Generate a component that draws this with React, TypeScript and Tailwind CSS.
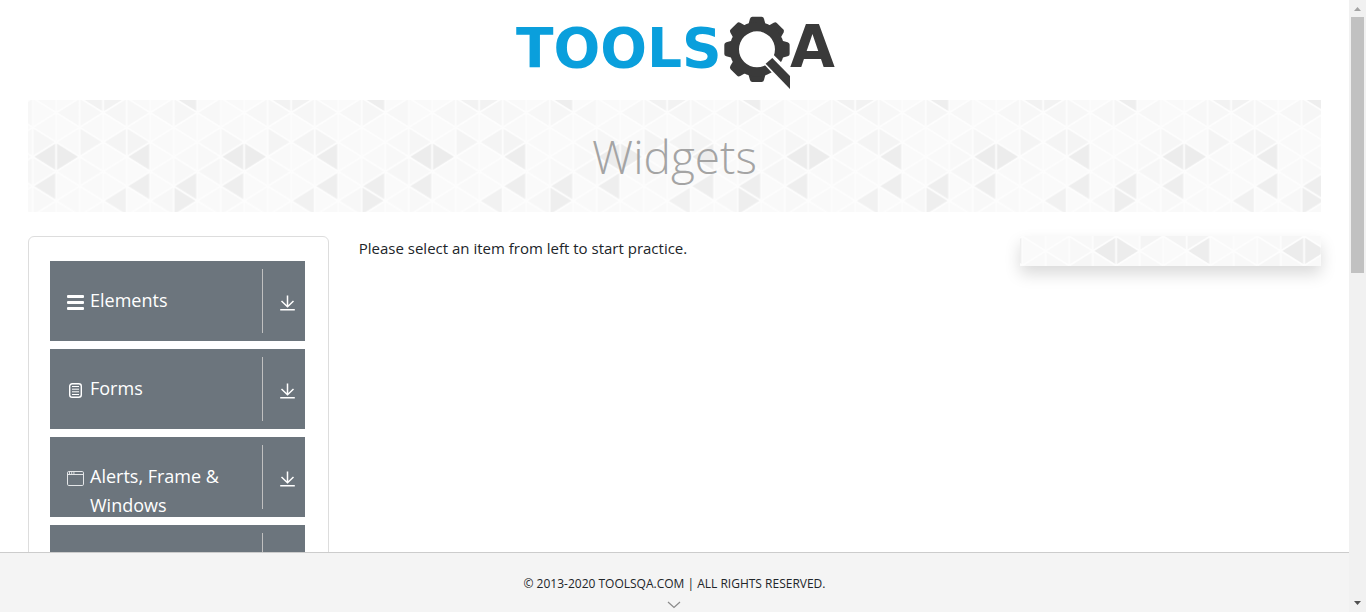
import React from "react";

const COL = 23.5;
const HALF = 14.7;
const TILE = COL * 8;

const SHADES: Record<string, string> = {
  "0,4": "#ececec", "1,4": "#ececec", "0,6": "#eeeeee", "4,4": "#ededed", "4,6": "#eeeeee",
  "6,6": "#eeeeee", "6,7": "#eeeeee", "3,7": "#f1f1f1", "6,0": "#eeeeee", "2,0": "#f2f2f2",
  "3,0": "#f2f2f2", "2,3": "#f4f4f4", "3,3": "#f4f4f4", "4,3": "#f4f4f4", "0,3": "#f6f6f6",
  "1,1": "#f7f7f7", "2,1": "#f7f7f7", "3,1": "#f6f6f6", "4,1": "#f7f7f7", "5,1": "#f7f7f7",
  "6,1": "#f6f6f6", "7,1": "#f7f7f7", "7,3": "#f8f8f8", "7,5": "#f6f6f6", "0,5": "#f8f8f8",
  "6,5": "#f8f8f8", "2,5": "#f8f8f8", "5,7": "#f7f7f7", "0,7": "#f8f8f8", "7,4": "#f8f8f8",
};

function Triangles({ id, x, y, className }: { id: string; x: number; y: number; className?: string }) {
  const cells: React.ReactElement[] = [];
  for (let k = 0; k < 8; k++) {
    for (let n = -1; n < 10; n++) {
      const l = k * COL;
      const r = l + COL;
      const c = n * HALF;
      const apexLeft = (k + n) % 2 === 0;
      const points = apexLeft
        ? `${l},${c} ${r},${c - HALF} ${r},${c + HALF}`
        : `${r},${c} ${l},${c - HALF} ${l},${c + HALF}`;
      const plain = apexLeft ? "#f9f9f9" : "#fafafa";
      cells.push(<polygon key={`${k},${n}`} points={points} fill={SHADES[`${k},${n}`] ?? plain} />);
    }
  }
  return (
    <svg aria-hidden="true" className={className} width="100%" height="100%">
      <defs>
        <pattern id={id} x={x} y={y} width={TILE} height={HALF * 8} patternUnits="userSpaceOnUse">
          <g stroke="#fdfdfd" strokeWidth="1.6" strokeLinejoin="round">{cells}</g>
        </pattern>
      </defs>
      <rect width="100%" height="100%" fill={`url(#${id})`} />
    </svg>
  );
}

function Logo() {
  return (
    <svg viewBox="0 0 340 90" className="h-[90px] w-[340px]" role="img" aria-label="TOOLSQA">
      <text x="11" y="59" fontSize="55" fontWeight="700" fontFamily="'DejaVu Sans', sans-serif" fill="#0a9fdc">TOOLS</text>
      <g transform="scale(0.3333)">
        <g fill="#3a3a3a" transform="translate(756 124)">
          {[0, 45, 90, 180, 225, 270, 315].map((a) => (
            <path key={a} transform={`rotate(${a})`} d="M-27-70-21-92Q-19-98-14-98H14Q19-98 21-92L27-70Z" />
          ))}
          <path fillRule="evenodd" d="M0-82A82 82 0 1 1 0 82A82 82 0 1 1 0-82ZM0-54A54 54 0 1 0 0 54A54 54 0 1 0 0-54Z" />
        </g>
        <path d="M783 166 804 147 866 209V256Z" fill="#fff" stroke="#fff" strokeWidth="12" />
        <path d="M782 167 802 150 855 204V243Z" fill="#3a3a3a" />
      </g>
      <text x="285" y="59" fontSize="58" fontWeight="700" fontFamily="'DejaVu Sans', sans-serif" fill="#3a3a3a">A</text>
    </svg>
  );
}

function MenuIcon() {
  return (
    <svg width="18" height="18" viewBox="0 0 18 18" aria-hidden="true" fill="#fff">
      <rect x="0" y="1" width="17" height="3" rx="1" />
      <rect x="0" y="7" width="17" height="3" rx="1" />
      <rect x="0" y="13" width="17" height="3" rx="1" />
    </svg>
  );
}

function FormIcon() {
  return (
    <svg width="18" height="18" viewBox="0 0 18 18" aria-hidden="true" fill="none" stroke="#fff">
      <rect x="2.7" y="1.7" width="11.6" height="13.6" rx="2.5" strokeWidth="1.4" />
      <path d="M5 4.500h7M5 7.200h7M5 9.800h7M5 12.500h7" strokeWidth="1" />
    </svg>
  );
}

function WindowIcon() {
  return (
    <svg width="18" height="18" viewBox="0 0 18 18" aria-hidden="true" fill="none" stroke="#e4e6e8">
      <rect x="0.5" y="1.5" width="16" height="14" rx="1.3" />
      <path d="M0.5 4.5h16" />
      <path d="M2 3h1M4.200 3h1M6.400 3h1" strokeWidth="1.4" stroke="#fff" />
    </svg>
  );
}

function DownIcon() {
  return (
    <svg width="16" height="16" viewBox="0 0 16 16" aria-hidden="true" fill="none" stroke="#fff" strokeWidth="1.5">
      <path d="M7.500 0.500V11.500M1.500 6l6 5.700L13.500 6M0.200 14.800h14.600" />
    </svg>
  );
}

const groups = [
  { name: "Elements", label: "Elements", icon: <MenuIcon /> },
  { name: "Forms", label: "Forms", icon: <FormIcon /> },
  { name: "Alerts, Frame & Windows", label: "Alerts, Frame & Windows", icon: <WindowIcon /> },
  { name: "Widgets", label: "", icon: <WindowIcon /> },
];

export default function App() {
  return (
    <div className="flex h-screen overflow-hidden bg-white font-['Open_Sans','Noto_Sans',sans-serif] text-[#212529]">
      <div className="flex min-w-0 flex-1 flex-col">
        <div className="min-h-0 flex-1 overflow-hidden px-7">
          <header className="flex h-[100px] justify-center pt-2">
            <a href="#" className="block h-[90px]">
              <Logo />
            </a>
          </header>

          <div className="relative flex h-28 items-center justify-center">
            <Triangles id="banner" x={4.7} y={-2} className="absolute inset-0" />
            <h1 className="relative text-[46px] font-light text-[#a4a4a4]">Widgets</h1>
          </div>

          <div className="mt-6 grid grid-cols-4 items-start gap-[30px]">
            <nav className="rounded-md border border-[#dddddd] pt-6 pr-[23px] pb-6 pl-[21px]">
              <ul className="flex flex-col gap-2">
                {groups.map((g) => (
                  <li key={g.name}>
                    <button
                      type="button"
                      aria-label={g.name}
                      className="flex h-20 w-full bg-[#6c757d] py-2 pl-[17px] text-left text-white"
                    >
                      <span className="mt-[25px] shrink-0">{g.icon}</span>
                      <span className="mt-[17px] ml-[5px] min-w-0 flex-1 text-lg leading-[29px]">{g.label}</span>
                      <span className="flex h-16 w-[43px] shrink-0 items-center border-l border-[#c0c0c0] pt-1 pl-[17px]">
                        <DownIcon />
                      </span>
                    </button>
                  </li>
                ))}
              </ul>
            </nav>
            <main className="col-span-2 text-[15px] leading-6">Please select an item from left to start practice.</main>
            <aside className="h-[30px] shadow-[0_8px_16px_rgba(0,0,0,0.15)]">
              <Triangles id="side" x={72.7} y={-43.8} />
            </aside>
          </div>
        </div>

        <footer className="flex h-[60px] shrink-0 flex-col items-center border-t border-[#cccccc] bg-[#f4f4f4] pt-[21px]">
          <p className="text-xs leading-5">© 2013-2020 TOOLSQA.COM | ALL RIGHTS RESERVED.</p>
          <svg width="14" height="8" viewBox="0 0 14 8" className="mt-[7px] mr-[2px] shrink-0" aria-hidden="true" fill="none" stroke="#8a8a8a" strokeWidth="1.2">
            <path d="M1 1l6 5.5L13 1" />
          </svg>
        </footer>
      </div>

      <div aria-hidden="true" className="flex w-[17px] shrink-0 flex-col items-center justify-between bg-[#f1f1f1]">
        <div className="flex flex-col items-center">
          <svg width="17" height="17" viewBox="0 0 17 17" fill="#a3a3a3">
            <path d="M5 11h7L8.500 7Z" />
          </svg>
          <div className="h-64 w-[13px] bg-[#c1c1c1]" />
        </div>
        <svg width="17" height="17" viewBox="0 0 17 17" fill="#505050">
          <path d="M5 6h7L8.500 10Z" />
        </svg>
      </div>
    </div>
  );
}
